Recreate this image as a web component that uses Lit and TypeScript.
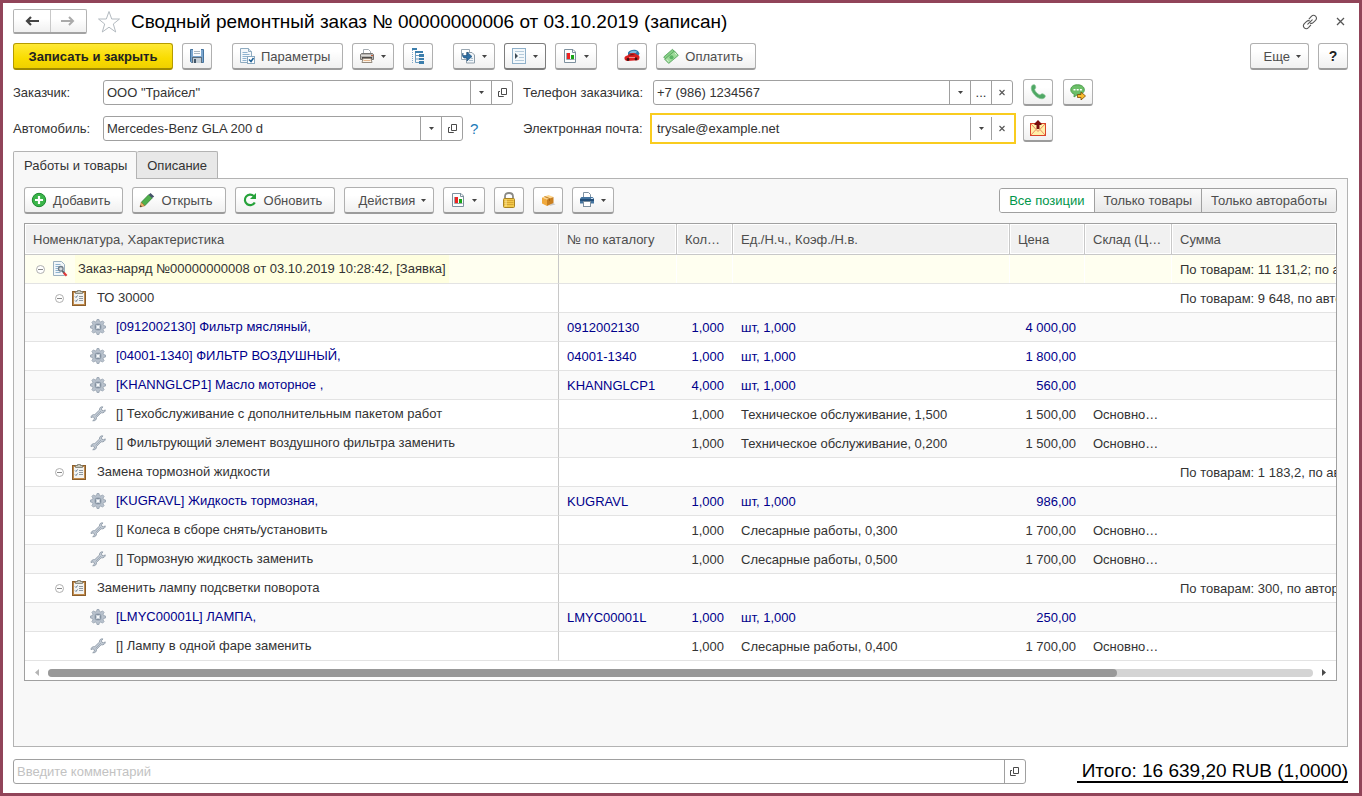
import { LitElement, html, css, svg, nothing, type TemplateResult } from "lit";
import { customElement, property, state } from "lit/decorators.js";
import { classMap } from "lit/directives/class-map.js";

/* ---------- icons (16 x 16 grid) ---------- */

const sheet = svg`<path d="M1.5.5h8l3 3v11h-11z" fill="#f4f8fb" stroke="#8fabc0"/><path d="M9.500.5v3h3" fill="#dbe7ef" stroke="#8fabc0"/>`;

const chart = svg`
  <path d="M2.500 1.500h8.500l2.500 2.500v10.500h-11z" fill="#fcfdfd" stroke="#7d909e"/>
  <path d="M10.500 1.500v3h3" fill="none" stroke="#7d909e"/>
  <path d="M4.500 5v6.500h8" fill="none" stroke="#9aa6ae"/>
  <rect x="5" y="5" width="3" height="6" fill="#ee2222"/>
  <rect x="9" y="7" width="3" height="4" fill="#19a519"/>`;

const icons: Record<string, TemplateResult | unknown> = {
  save: svg`
    <path d="M1.500 1.500h13v13h-12l-1-1z" fill="#7ba6cf" stroke="#45749f"/>
    <rect x="4" y="1" width="8" height="7" fill="#fbfcfd"/>
    <path d="M5 3.500h6M5 5.500h6" stroke="#a9b7c2"/>
    <rect x="3" y="9" width="10" height="6" fill="#5b6d7c"/>
    <rect x="4" y="10" width="8" height="5" fill="#c4ced6"/>
    <rect x="5" y="11" width="2" height="4" fill="#43576a"/>`,
  params: svg`${sheet}
    <path d="M3.500 4.500h5M3.500 6.500h7M3.500 8.500h5M3.500 10.500h4M3.500 12.500h4" stroke="#8fb3cf"/>
    <rect x="8.500" y="8.500" width="7" height="7" fill="#fff" stroke="#8aa9c0"/>
    <path d="M10 11.500l2 2 2.500-3.500" fill="none" stroke="#1c5f95" stroke-width="1.500"/>`,
  printer: svg`
    <path d="M4.500 6V1.500h5l2 2V6" fill="#fff" stroke="#a5adb3"/>
    <path d="M1.500 6.500l1-1h11l1 1v5h-13z" fill="#b5b3b0" stroke="#767472"/>
    <path d="M2 7.500h12" stroke="#dedcd8"/>
    <rect x="3" y="9" width="10" height="2" fill="#4e4b49"/>
    <path d="M4 10.500h8l1 4H3z" fill="#fbf3e8" stroke="#948a7e"/>
    <path d="M4.500 12.500h7" stroke="#e5b58c"/>
    <rect x="12" y="7" width="2" height="1" fill="#c65b36"/>`,
  tree: svg`
    <rect x="2" y="0" width="5" height="2" fill="#3c7eac"/>
    <path d="M2.500 2v13" stroke="#7fa9c8" stroke-dasharray="1 1"/>
    <rect x="5" y="3" width="8" height="2" fill="#3c7eac"/>
    <path d="M5.500 5v9.500H9M5.500 7.500H9M5.500 11H9" fill="none" stroke="#6b9cc0"/>
    <rect x="9" y="6" width="5" height="3" fill="#3c7eac"/>
    <rect x="9" y="10" width="5" height="2" fill="#3c7eac"/>
    <rect x="9" y="13" width="5" height="3" fill="#3c7eac"/>`,
  create: svg`
    <path d="M1.500 1.500h8v10h-8z" fill="#fff" stroke="#9aa8b3"/>
    <path d="M6.500 4.500h5.500l2.500 2.500v8h-8z" fill="#f2f6f9" stroke="#8d9ca8"/>
    <path d="M9 12.500h4M11 10.500h2" stroke="#a9bccb"/>
    <path d="M3 5v2.500h4V4l5 4.500-5 4.500V10H4C2.500 9 2 7 3 5z" fill="#2f6fa3" stroke="#1d4f7b" stroke-width=".6"/>`,
  list: svg`
    <rect x="1.500" y=".5" width="13" height="15" fill="#f3f8fb" stroke="#8fb0c9"/>
    <path d="M4 5v6l3-3z" fill="#3c4a55"/>
    <path d="M4 3.500h9M8 6.500h5M8 9.500h5M4 12.500h9" stroke="#b5cbdb"/>`,
  chart,
  car: svg`
    <path d="M4 4.500C6 1.500 11 .8 14 3l1.500 2.500-1 2H4z" fill="#2c79a8"/>
    <path d="M6 4c2-1.600 5-1.600 7-.6L12 5H5.500z" fill="#7dbbdc"/>
    <path d="M.5 9.500C1 8 3 7.600 4 7.300 6 4.500 11 4.300 13 6.800c1.500.2 2.500 1 2.500 2.500 0 1.500-.5 2.700-1.500 2.900L3 13C1 12.500.2 11.500.5 9.500z" fill="#d92020"/>
    <path d="M5 7.400c1.500-1.500 4.500-1.600 6-.3z" fill="#5a1414"/>
    <circle cx="4" cy="11.500" r="1.400" fill="#3b1111"/><circle cx="12" cy="11" r="1.400" fill="#3b1111"/>
    <path d="M5 9.500h6" stroke="#f48b8b"/>`,
  money: svg`
    <path d="M.7 9L9.500 1.300l3.500 4L4.200 13z" fill="#86cf86" stroke="#4f9f57" stroke-width=".8"/>
    <path d="M1.700 11.300L11.500 3l3.800 4.400-9.600 8z" fill="#9edb9a" stroke="#4f9f57" stroke-width=".8"/>
    <circle cx="8.500" cy="9.200" r="2" fill="#5bb465"/><path d="M4 11.500l1.500 2M12 4.800l1.500 2" stroke="#e1f6df"/>`,
  phone: svg`<path d="M2.200 1.200c1.500-1 3-.6 3.300.9.300 1.300.5 2-.7 3-.7 1.400 3.600 6 5.500 5.700 1-.9 1.800-1.300 3-.7 1.700.7 2.400 1.800 1.700 3.200-1.300 1.900-4.300 2-7.300.2C3.500 11-.7 4.500 2.200 1.200z" fill="#4fa865" stroke="#85c391" stroke-width=".7"/>`,
  sms: svg`
    <path d="M7.500.8C3.500.8.8 2.800.8 5.800c0 2.300 1.500 3.700 3.500 4.400L4 13l3.500-2.500c4 0 6.800-1.700 6.800-4.700S11.500.8 7.500.8z" fill="#6cbf68" stroke="#4c9c4c"/>
    <path d="M3.500 5h2v1.600h-2zM6.700 5h2v1.600h-2zM9.900 5h2v1.600h-2z" fill="#fff"/>
    <path d="M7.500 10.500h3.500V8l4.500 4-4.500 4v-2.500H7.500z" fill="#f9bb2d" stroke="#7a4a00" stroke-width=".8"/>`,
  mail: svg`
    <rect x=".5" y="3.500" width="15" height="12" fill="#fff1a8" stroke="#d9442a"/>
    <path d="M1 4l7 7.500L15 4M1 15l5-5.500M15 15l-5-5.500" fill="none" stroke="#f08a63"/>
    <path d="M8 0l3.500 3.500V5h-2v4h-3V5h-2V3.500z" fill="#7a0d0d"/>`,
  add: svg`<circle cx="8" cy="8" r="6.700" fill="#3bb54a" stroke="#1d8a30"/><path d="M8 4v8M4 8h8" stroke="#fff" stroke-width="2.200"/>`,
  pencil: svg`
    <path d="M2.300 10.300l7.400-7.600 3.500 3.300-7.500 7.800z" fill="#4fb04c" stroke="#2e7d32" stroke-width=".8"/>
    <path d="M9.700 2.700L11.500 1l3.700 3.400L13.200 6z" fill="#46536b"/>
    <path d="M2.300 10.300L1 15l4.700-1.200z" fill="#f0b46a" stroke="#a36a2a" stroke-width=".6"/><path d="M1 15l.6-2 1.400 1.400z" fill="#333"/>`,
  refresh: svg`<path d="M11.800 4A5.300 5.300 0 1 0 12.800 10.500" fill="none" stroke="#26a23a" stroke-width="2.200"/><path d="M14 1v6H8z" fill="#26a23a"/>`,
  lock: svg`
    <path d="M4 7V4.500C4 2 5.500 1 8 1s4 1 4 3.500V7" fill="none" stroke="#8a8a86" stroke-width="1.800"/>
    <rect x="2.500" y="6.500" width="11" height="9" rx="1" fill="#f2c94a" stroke="#a98322"/>
    <path d="M3.500 8.500h9M3.500 10.500h9M3.500 12.500h9" stroke="#d8a634"/><path d="M5 7.500v7" stroke="#fbe9a3"/>`,
  box: svg`
    <path d="M9 14l6.500-1.500-3-2z" fill="#c9c9c9"/>
    <path d="M2 5.500L8.500 3l5 2L7 7.500z" fill="#ffd58a"/>
    <path d="M2 5.500l5 2V14l-5-2.500z" fill="#f0a93c"/><path d="M7 7.500L13.500 5v6L7 14z" fill="#c97f1f"/>
    <path d="M4.500 4.500l5 2v2.500" fill="none" stroke="#a8640f" stroke-width=".8"/>`,
  printerBlue: svg`
    <path d="M4.500 6V.5h5l2 2V6" fill="#fff" stroke="#8193a3"/>
    <path d="M2.500 5h11l1.500 1.500v5H1v-5z" fill="#4474a0"/>
    <path d="M1 8h14" stroke="#234e78" stroke-width="2"/><rect x="12" y="6" width="2" height="1" fill="#cfe2f2"/>
    <rect x="4.500" y="9.500" width="7" height="5" fill="#fff" stroke="#7d8f9f"/>`,
  order: svg`<path d="M1.500.5h8l3 3v11h-11z" fill="#f2f7fa" stroke="#9bb0bf"/>
    <path d="M3.500 3.500h5M3.500 5.500h4M3.500 7.500h3M3.500 9.500h3M3.500 11.500h5" stroke="#8fb3cf"/>
    <circle cx="8.800" cy="7.800" r="2.300" fill="#d5dade" stroke="#6f7d88" stroke-width="1.300"/>
    <path d="M10.300 9.800l2 2.300" stroke="#59646e" stroke-width="1.800"/>
    <path d="M11.800 11.800l2.800 3" stroke="#e03a3a" stroke-width="2.200"/>`,
  clipboard: svg`
    <rect x="1.500" y="1.500" width="13" height="14" fill="#c08a4c" stroke="#8a5e2c"/>
    <rect x="3" y="3" width="10" height="11" fill="#f2f3f2"/>
    <path d="M4.500 3.500V1.500h2V.5h3v1h2v2z" fill="#c9c9be" stroke="#77776b" stroke-width=".8"/>
    <path d="M4 6.500l1 1 1.500-2M4 10.500l1 1 1.500-2" fill="none" stroke="#5c7a92"/>
    <path d="M8 6.500h4M8 8.500h4M8 10.500h4" stroke="#8e979f"/>`,
  gear: svg`
    <path d="M7 .5h2l.4 1.900 1.500.6 1.700-1.100 1.500 1.500L13 5.100l.6 1.500 1.900.4v2l-1.900.4-.6 1.500 1.100 1.700-1.500 1.500-1.700-1.100-1.500.6L9 15.500H7l-.4-1.900-1.500-.6-1.700 1.100-1.500-1.500L3 10.900l-.6-1.500L.5 9V7l1.900-.4L3 5.100 1.900 3.400l1.500-1.500L5.100 3l1.500-.6z" fill="#b9c2cd" stroke="#939fad" stroke-width=".8"/>
    <circle cx="8" cy="8" r="4" fill="#a7b2bf"/>
    <rect x="5.500" y="5.500" width="5" height="5" rx="1" fill="#c9d1da" stroke="#7d8a9a" stroke-width=".9"/>
    <rect x="7" y="7" width="2" height="2" fill="#f8fafb"/>`,
  wrench: svg`
    <path d="M15.300 3.900L13.300 4.800 11.800 4.200 11.500 2.700 12.900.9c-2.200-.4-3.700 1-3.400 3.100L4.800 8.600C2.800 8.300.9 9.600 1 11.600l2-.7 1.300.8.100 1.500-1.700 1.500c2.200.5 4.100-1 3.800-3.300l4.600-4.600c2.100.5 4.200-.7 4.200-2.900z" fill="#c3cbd5" stroke="#8894a2" stroke-width=".8"/>
    <path d="M5.500 10.500l5.500-5.500" stroke="#97a3b0" stroke-width=".8"/>`,
};

const icon = (name: string) => html`<svg class="icon" viewBox="0 0 16 16" aria-hidden="true">${icons[name]}</svg>`;
const caret = html`<svg class="caret" viewBox="0 0 5 3" aria-hidden="true"><path d="M0 0h5L2.500 3z" fill="#444"/></svg>`;
const openGlyph = html`<svg class="glyph" viewBox="0 0 11 11" aria-hidden="true"><path d="M4.500 1.500h5v6h-5z" fill="none" stroke="#4a4a4a"/><path d="M3 4.500H1.500v5h5V9" fill="none" stroke="#4a4a4a"/></svg>`;
const crossGlyph = html`<svg class="glyph" viewBox="0 0 11 11" aria-hidden="true"><path d="M2.500 3l5 5M7.500 3l-5 5" stroke="#555" stroke-width="1.100"/></svg>`;

const shared = css`
  *, *::before, *::after { box-sizing: border-box; }
  button, input { font: inherit; color: inherit; margin: 0; }
  svg { display: block; flex: none; }
  .icon { width: 16px; height: 16px; }
  .caret { width: 5px; height: 3px; }
  .glyph { width: 11px; height: 11px; }
`;

/* ---------- command button ---------- */

@customElement("tool-button")
class ToolButton extends LitElement {
  @property() icon = "";
  @property() label = "";
  @property() hint = "";
  @property() kind = "";
  @property({ type: Boolean }) menu = false;

  static styles = [shared, css`
    :host { display: block; flex: none; }
    .button {
      display: flex; align-items: center; justify-content: center; gap: 6px;
      height: 27px; min-width: 30px; padding: 0 6px;
      border: 1px solid #b0b0b0; border-bottom: 2px solid #9c9c9c; border-radius: 3px;
      background: linear-gradient(#fff 30%, #f0f0f0); color: #4d4d4d; white-space: nowrap; cursor: pointer;
    }
    .labelled { padding-right: 12px; }
    .text-only { padding-left: 13px; }
    .with-menu { padding-right: 7px; }
    .primary {
      min-width: 160px; padding: 0 13px; font-weight: 700; color: #222;
      border-color: #b59b00 #b59b00 #a08a00;
      background: linear-gradient(#ffe936, #f9dc00 60%, #efd000);
    }
    .active { border-color: #7d7d7d; }
    .help { font-weight: 700; color: #222; font-size: 14px; }
  `];

  render() {
    const classes = {
      button: true,
      labelled: !!this.label && this.kind !== "help",
      "text-only": !!this.label && !this.icon && this.kind !== "help",
      "with-menu": this.menu,
      primary: this.kind === "primary",
      active: this.kind === "active",
      help: this.kind === "help",
    };
    return html`<button type="button" class=${classMap(classes)} aria-label=${this.label || this.hint}>
      ${this.icon ? icon(this.icon) : nothing}${this.label ? html`<span>${this.label}</span>` : nothing}${this.menu ? caret : nothing}
    </button>`;
  }
}

/* ---------- order lines ---------- */

type Line = {
  level: number; icon: string; name: string; part?: boolean;
  code?: string; qty?: string; unit?: string; price?: string; store?: string; sum?: string;
};

const part = (code: string, name: string, qty: string, price: string): Line =>
  ({ level: 2, icon: "gear", part: true, name: `[${code}] ${name}`, code, qty, unit: "шт, 1,000", price });
const work = (name: string, unit: string, price: string): Line =>
  ({ level: 2, icon: "wrench", name: `[] ${name}`, qty: "1,000", unit, price, store: "Основно…" });
const group = (name: string, sum: string): Line => ({ level: 1, icon: "clipboard", name, sum });

const lines: Line[] = [
  { level: 0, icon: "order", name: "Заказ-наряд №00000000008 от 03.10.2019 10:28:42, [Заявка]", sum: "По товарам: 11 131,2; по а" },
  group("ТО 30000", "По товарам: 9 648, по авто"),
  part("0912002130", "Фильтр мясляный,", "1,000", "4 000,00"),
  part("04001-1340", "ФИЛЬТР ВОЗДУШНЫЙ,", "1,000", "1 800,00"),
  part("KHANNGLCP1", "Масло моторное ,", "4,000", "560,00"),
  work("Техобслуживание с дополнительным пакетом работ", "Техническое обслуживание, 1,500", "1 500,00"),
  work("Фильтрующий элемент воздушного фильтра заменить", "Техническое обслуживание, 0,200", "1 500,00"),
  group("Замена тормозной жидкости", "По товарам: 1 183,2, по ав"),
  part("KUGRAVL", "Жидкость тормозная,", "1,000", "986,00"),
  work("Колеса в сборе снять/установить", "Слесарные работы, 0,300", "1 700,00"),
  work("Тормозную жидкость заменить", "Слесарные работы, 0,500", "1 700,00"),
  group("Заменить лампу подсветки поворота", "По товарам: 300, по автор"),
  part("LMYC00001L", "ЛАМПА,", "1,000", "250,00"),
  work("Лампу в одной фаре заменить", "Слесарные работы, 0,400", "1 700,00"),
];

@customElement("order-lines")
class OrderLines extends LitElement {
  static styles = [shared, css`
    :host { display: block; border: 1px solid #a0a0a0; background: #fff; overflow: hidden; }
    table { width: 100%; table-layout: fixed; border-collapse: separate; border-spacing: 0; }
    th, td { padding: 0 8px; text-align: left; font-weight: 400; white-space: nowrap; overflow: hidden; text-overflow: ellipsis; }
    th {
      height: 31px; color: #4d4d4d; background: #f1f1f1;
      border-bottom: 1px solid #c8c8c8; border-right: 1px solid #c8c8c8; box-shadow: inset 0 0 0 1px #fff;
    }
    th:last-child { border-right: 0; }
    td { height: 29px; border-bottom: 1px solid #e3e3e3; color: #333; }
    tr:nth-child(odd) td { background: #fafafa; }
    td:first-child { border-right: 1px solid #c8c8c8; }
    .code { width: 118px; } .qty { width: 56px; } .unit { width: 277px; }
    .price { width: 75px; } .store { width: 87px; } .sum { width: 164px; }
    .code, .qty, .unit, .price, .store, .sum { text-overflow: clip; }
    td.num { padding-right: 9px; text-align: right; }
    td.total { padding-right: 0; text-overflow: clip; }
    tr.part td { color: #00008b; }
    tbody tr.head td { background: #fffff0; }
    tbody tr.head td + td { box-shadow: inset -1px 0 #fff; }
    .cell { display: flex; align-items: center; padding-left: 2px; }
    .level-1 { padding-left: 21px; }
    .level-2 { padding-left: 40px; }
    .toggle { width: 11px; height: 11px; margin-right: 6px; padding: 0; border: 0; background: none; flex: none; }
    .toggle svg { width: 11px; height: 11px; }
    .name { margin-left: 7px; padding: 0 3px; line-height: 28px; overflow: hidden; text-overflow: ellipsis; }
    .head .name { background: #ffffdf; }
    .scroll { display: flex; align-items: center; height: 19px; padding: 4px 8px 0; gap: 7px; }
    .arrow { width: 8px; height: 9px; padding: 0; border: 0; background: none; flex: none; display: grid; place-items: center; }
    .arrow svg { width: 4px; height: 7px; }
    .track { flex: 1; height: 8px; border-radius: 4px; background: #d4d4d4; }
    .thumb { height: 8px; border-radius: 4px; background: #999; }
  `];

  private position = 84.5;

  render() {
    return html`
      <table>
        <thead><tr>
          <th scope="col">Номенклатура, Характеристика</th>
          <th scope="col" class="code">№ по каталогу</th>
          <th scope="col" class="qty">Кол…</th>
          <th scope="col" class="unit">Ед./Н.ч., Коэф./Н.в.</th>
          <th scope="col" class="price">Цена</th>
          <th scope="col" class="store">Склад (Ц…</th>
          <th scope="col" class="sum">Сумма</th>
        </tr></thead>
        <tbody>${lines.map((l) => html`
          <tr class=${classMap({ part: !!l.part, head: l.level === 0 })}>
            <td><div class="cell level-${l.level}">
              ${l.level < 2
                ? html`<button type="button" class="toggle" aria-label="Свернуть"><svg viewBox="0 0 11 11"><circle cx="5.500" cy="5.500" r="4" fill="#fff" stroke="#b0b0b0"/><path d="M3 5.500h5" stroke="#888"/></svg></button>`
                : html`<span class="toggle"></span>`}
              ${icon(l.icon)}<span class="name">${l.name}</span>
            </div></td>
            <td>${l.code}</td>
            <td class="num">${l.qty}</td>
            <td>${l.unit}</td>
            <td class="num">${l.price}</td>
            <td>${l.store}</td>
            <td class="total">${l.sum}</td>
          </tr>`)}
        </tbody>
      </table>
      <div class="scroll">
        <button type="button" class="arrow" aria-label="Влево"><svg viewBox="0 0 4 7"><path d="M4 0v7L0 3.500z" fill="#b5b5b5"/></svg></button>
        <div class="track"><div class="thumb" style="width:${this.position}%"></div></div>
        <button type="button" class="arrow" aria-label="Вправо"><svg viewBox="0 0 4 7"><path d="M0 0v7l4-3.500z" fill="#4a4a4a"/></svg></button>
      </div>`;
  }
}

/* ---------- document form ---------- */

@customElement("app-root")
class AppRoot extends LitElement {
  @state() private filter = 0;

  static styles = [shared, css`
    :host {
      display: flex; flex-direction: column; box-sizing: border-box; min-height: 100vh;
      padding: 6px 11px 9px 10px; border: 3px solid #914459; background: #fff;
      font: 13px/15px "Liberation Sans", Arial, sans-serif; color: #333;
    }
    .title-bar { display: flex; align-items: center; height: 25px; }
    .nav { display: flex; width: 74px; height: 25px; border: 1px solid #b3b3b3; border-bottom: 2px solid #a3a3a3; border-radius: 2px; background: linear-gradient(#fff 40%, #f0f0f0); }
    .nav button { flex: 1; display: grid; place-items: center; padding: 0; border: 0; background: none; }
    .nav button + button { border-left: 1px solid #c8c8c8; }
    .nav svg { width: 14px; height: 10px; }
    .star { margin: 0 10px; padding: 0; border: 0; background: none; }
    .star svg { width: 24px; height: 24px; }
    h1 { flex: 1; margin: 0; font-size: 19px; line-height: 24px; font-weight: 400; color: #000; white-space: nowrap; }
    .window-tools { display: flex; align-items: center; gap: 16px; padding-right: 1px; }
    .window-tools button { padding: 0; border: 0; background: none; }
    .link { width: 16px; height: 16px; }
    .close { width: 13px; height: 13px; }

    .toolbar { display: flex; gap: 9px; margin-top: 9px; }
    .group { display: flex; gap: 9px; margin-right: 11px; }
    .push { margin-left: auto; }

    .form {
      display: grid; grid-template-columns: 90px minmax(0, 410px) 140px minmax(0, 360px) auto;
      align-items: center; row-gap: 9px; margin-top: 9px;
    }
    .second { padding-left: 10px; white-space: nowrap; }
    .field { display: flex; height: 25px; min-width: 0; border: 1px solid #a0a0a0; border-radius: 3px; background: #fff; }
    .field input { flex: 1; min-width: 0; width: 0; padding: 0 3px; border: 0; outline: 0; background: none; }
    .field input::placeholder { color: #c2c2c2; opacity: 1; }
    .field button { width: 21px; display: grid; place-items: center; padding: 0; border: 0; border-left: 1px solid #a0a0a0; background: none; flex: none; }
    .focused { border-color: #fff; outline: 2px solid #f9cc1f; outline-offset: 1px; border-radius: 0; }
    .with-hint { display: flex; align-items: center; gap: 7px; }
    .with-hint .field { flex: 0 1 360px; }
    .hint { color: #1a7ab8; text-decoration: none; font-size: 15px; }
    .actions { display: flex; gap: 10px; margin-left: 10px; }

    .tabs { display: flex; margin-top: 9px; }
    .tab {
      height: 27px; padding: 0 10px; border: 1px solid #b3b3b3; border-bottom: 0; border-radius: 2px 2px 0 0;
      background: #e8e8e8; color: #333;
    }
    .tab + .tab { border-left: 0; }
    .tab.current { height: 28px; padding: 0 9px 0 10px; margin-bottom: -1px; background: #f8f8f8; z-index: 1; }
    .panel { flex: 1; border: 1px solid #b3b3b3; background: #f8f8f8; padding: 8px 10px; }
    .panel .toolbar { margin: 0 0 9px; align-items: center; }
    .segments { display: flex; height: 25px; margin: 0 0 0 auto; border: 1px solid #a0a0a0; border-radius: 3px; overflow: hidden; }
    .segments button { padding: 0 9px; border: 0; border-left: 1px solid #a0a0a0; background: linear-gradient(#fafafa, #e8e8e8); color: #4d4d4d; white-space: nowrap; }
    .segments button:first-child { border-left: 0; }
    .segments button.chosen { background: #fff; color: #00964a; }

    .footer { display: flex; align-items: center; gap: 51px; margin-top: 12px; }
    .footer .field { flex: 1; }
    .total { padding-left: 5px; border-bottom: 2px solid #000; font-size: 19px; line-height: 20px; color: #000; white-space: nowrap; }
  `];

  firstUpdated() {
    const email = this.renderRoot.querySelector<HTMLInputElement>("#email")!;
    email.focus();
    email.setSelectionRange(email.value.length, email.value.length);
  }

  render() {
    return html`
      <header class="title-bar">
        <div class="nav">
          <button type="button" aria-label="Назад"><svg viewBox="0 0 14 10"><path d="M14 5H3M6 1L2 5l4 4" fill="none" stroke="#444" stroke-width="2.200"/></svg></button>
          <button type="button" aria-label="Вперед"><svg viewBox="0 0 14 10"><path d="M0 5h11M8 1l4 4-4 4" fill="none" stroke="#aaa" stroke-width="2"/></svg></button>
        </div>
        <button type="button" class="star" aria-label="В избранное"><svg viewBox="0 0 24 24"><path d="M12 1.500l2.700 7.500h7.800l-6.200 5 2.400 8-6.700-4.800L5.300 22l2.400-8-6.200-5h7.800z" fill="#fff" stroke="#b3bac0"/></svg></button>
        <h1>Сводный ремонтный заказ № 00000000006 от 03.10.2019 (записан)</h1>
        <div class="window-tools">
          <button type="button" aria-label="Ссылка"><svg class="link" viewBox="0 0 18 18"><g fill="none" stroke="#555" stroke-width="1.200" stroke-linecap="round"><path d="M8 5.500l2.500-2.800c1.500-1.500 3.400-1.500 4.700-.2 1.300 1.300 1.300 3.200 0 4.700l-2.700 2.500c-1 .9-2 1-3 .6"/><path d="M9.800 12.500l-2.500 2.800c-1.500 1.500-3.400 1.500-4.700.2-1.300-1.300-1.300-3.200 0-4.700l2.700-2.500c1-.9 2-1 3-.6"/><path d="M6.500 11.500l5-5"/></g></svg></button>
          <button type="button" aria-label="Закрыть"><svg class="close" viewBox="0 0 13 13"><path d="M3 3l7 7M10 3l-7 7" stroke="#555" stroke-width="1.300"/></svg></button>
        </div>
      </header>

      <div class="toolbar">
        <div class="group">
          <tool-button kind="primary" label="Записать и закрыть"></tool-button>
          <tool-button icon="save" hint="Записать"></tool-button>
        </div>
        <div class="group">
          <tool-button icon="params" label="Параметры"></tool-button>
          <tool-button icon="printer" hint="Печать" menu></tool-button>
          <tool-button icon="tree" hint="Структура"></tool-button>
        </div>
        <div class="group">
          <tool-button icon="create" hint="Создать на основании" menu></tool-button>
          <tool-button icon="list" hint="Перейти" kind="active" menu></tool-button>
          <tool-button icon="chart" hint="Отчеты" menu></tool-button>
        </div>
        <div class="group">
          <tool-button icon="car" hint="Автомобиль"></tool-button>
          <tool-button icon="money" label="Оплатить"></tool-button>
        </div>
        <tool-button class="push" label="Еще" menu></tool-button>
        <tool-button kind="help" label="?"></tool-button>
      </div>

      <div class="form">
        <label for="customer">Заказчик:</label>
        <div class="field">
          <input id="customer" type="text" .value=${'ООО "Трайсел"'}>
          <button type="button" aria-label="Выбрать">${caret}</button>
          <button type="button" aria-label="Открыть">${openGlyph}</button>
        </div>
        <label class="second" for="phone">Телефон заказчика:</label>
        <div class="field">
          <input id="phone" type="tel" .value=${"+7 (986) 1234567"}>
          <button type="button" aria-label="Выбрать">${caret}</button>
          <button type="button" aria-label="Подробнее">...</button>
          <button type="button" aria-label="Очистить">${crossGlyph}</button>
        </div>
        <div class="actions">
          <tool-button icon="phone" hint="Позвонить"></tool-button>
          <tool-button icon="sms" hint="Отправить SMS"></tool-button>
        </div>

        <label for="vehicle">Автомобиль:</label>
        <div class="with-hint">
          <div class="field">
            <input id="vehicle" type="text" .value=${"Mercedes-Benz GLA 200 d"}>
            <button type="button" aria-label="Выбрать">${caret}</button>
            <button type="button" aria-label="Открыть">${openGlyph}</button>
          </div>
          <a class="hint" href="#help">?</a>
        </div>
        <label class="second" for="email">Электронная почта:</label>
        <div class="field focused">
          <input id="email" type="text" inputmode="email" .value=${"trysale@example.net"}>
          <button type="button" aria-label="Выбрать">${caret}</button>
          <button type="button" aria-label="Очистить">${crossGlyph}</button>
        </div>
        <div class="actions">
          <tool-button icon="mail" hint="Отправить письмо"></tool-button>
        </div>
      </div>

      <div class="tabs" role="tablist">
        <button type="button" class="tab current" role="tab" aria-selected="true">Работы и товары</button>
        <button type="button" class="tab" role="tab" aria-selected="false">Описание</button>
      </div>
      <section class="panel" role="tabpanel">
        <div class="toolbar">
          <tool-button icon="add" label="Добавить"></tool-button>
          <tool-button icon="pencil" label="Открыть"></tool-button>
          <tool-button icon="refresh" label="Обновить"></tool-button>
          <tool-button label="Действия" menu></tool-button>
          <tool-button icon="chart" hint="Отчеты" menu></tool-button>
          <tool-button icon="lock" hint="Резерв"></tool-button>
          <tool-button icon="box" hint="Товары"></tool-button>
          <tool-button icon="printerBlue" hint="Печать" menu></tool-button>
          <div class="segments">
            ${["Все позиции", "Только товары", "Только автоработы"].map((t, i) => html`
              <button type="button" class=${classMap({ chosen: this.filter === i })} @click=${() => (this.filter = i)}>${t}</button>`)}
          </div>
        </div>
        <order-lines></order-lines>
      </section>

      <footer class="footer">
        <div class="field">
          <input type="text" aria-label="Комментарий" placeholder="Введите комментарий">
          <button type="button" aria-label="Открыть">${openGlyph}</button>
        </div>
        <div class="total">Итого: 16 639,20 RUB (1,0000)</div>
      </footer>`;
  }
}
